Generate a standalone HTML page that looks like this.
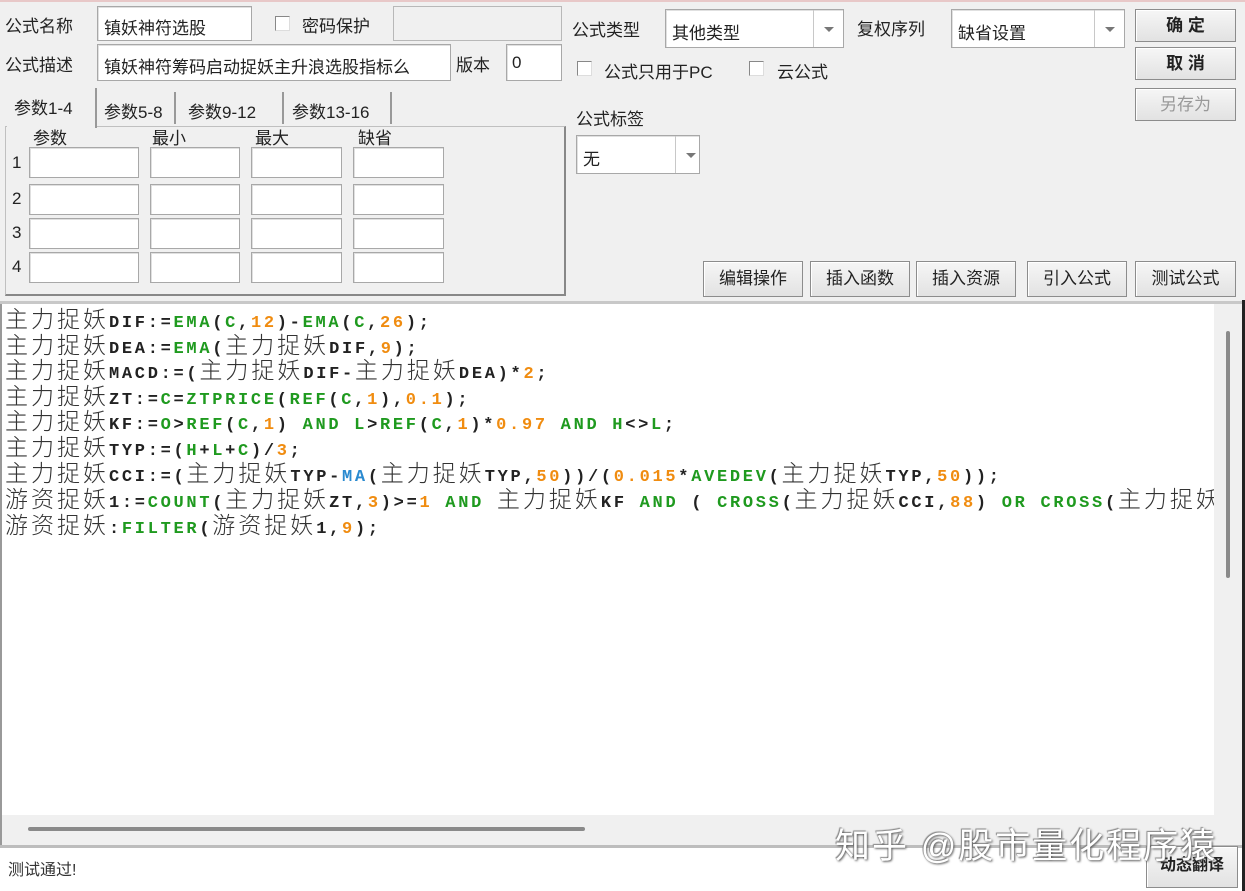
<!DOCTYPE html>
<html><head><meta charset="utf-8"><style>
*{box-sizing:border-box;margin:0;padding:0}
body{width:1245px;height:891px;background:#f0f0f0;position:relative;overflow:hidden;font-family:"Liberation Sans","Noto Sans CJK SC",sans-serif;font-size:17px;color:#222}
.a{position:absolute;white-space:nowrap}
.in{position:absolute;background:#fff;border:1px solid #a8a8a8;box-shadow:inset 1px 1px 0 #e0e0e0}
.dis{position:absolute;background:#f0f0f0;border:1px solid #b8b8b8}
.cb{position:absolute;width:15px;height:15px;background:#fff;border:1px solid #888;border-right-color:#ddd;border-bottom-color:#ddd}
.btn{position:absolute;background:linear-gradient(#f6f6f6,#e2e2e2);border:1px solid #8c8c8c;box-shadow:inset 1px 1px 0 #fff;text-align:center;font-size:17px;color:#222}
.dd{position:absolute;right:0;top:0;bottom:0;width:30px;border-left:1px solid #c8c8c8}
.dd:after{content:"";position:absolute;left:10px;top:50%;margin-top:-2px;border:5px solid transparent;border-top:5px solid #777;border-bottom:0}
.code{position:absolute;left:2px;top:304px;width:1212px;height:511px;background:#fff;overflow:hidden}
.ln{position:absolute;left:3px;height:26px;line-height:26px;white-space:nowrap}
.c{font-family:"Noto Sans CJK SC",sans-serif;font-size:23px;letter-spacing:3px;color:#333;font-weight:300}
.m{font-family:"Liberation Mono",monospace;font-weight:bold;font-size:17px;letter-spacing:2.7px;color:#222}
.g{color:#1f9a1f}.o{color:#f08c10}.b{color:#2a8ad0}
</style></head><body>
<div class="a" style="left:0;top:0;width:1245px;height:2px;background:#e8c8c8"></div>
<div class="a" style="left:5px;top:12px">公式名称</div>
<div class="in" style="left:97px;top:6px;width:155px;height:35px"><span class="a" style="left:6px;top:7px">镇妖神符选股</span></div>
<div class="cb" style="left:275px;top:16px"></div>
<div class="a" style="left:302px;top:12px">密码保护</div>
<div class="dis" style="left:393px;top:6px;width:169px;height:35px"></div>
<div class="a" style="left:5px;top:51px">公式描述</div>
<div class="in" style="left:97px;top:44px;width:354px;height:37px;overflow:hidden"><span class="a" style="left:6px;top:8px">镇妖神符筹码启动捉妖主升浪选股指标么</span></div>
<div class="a" style="left:456px;top:51px">版本</div>
<div class="in" style="left:506px;top:44px;width:56px;height:37px"><span class="a" style="left:5px;top:8px">0</span></div>
<!-- tabs -->
<div class="a" style="left:5px;top:126px;width:561px;height:170px;border:1px solid #c0c0c0;border-right:2px solid #888;border-bottom:2px solid #888;background:#f0f0f0"></div>
<div class="a" style="left:7px;top:88px;width:90px;height:40px;background:#f0f0f0;border-right:2px solid #999"></div>
<div class="a" style="left:14px;top:94px">参数1-4</div>
<div class="a" style="left:98px;top:92px;width:78px;height:32px;border-right:2px solid #999"></div>
<div class="a" style="left:104px;top:98px">参数5-8</div>
<div class="a" style="left:188px;top:98px">参数9-12</div>
<div class="a" style="left:244px;top:92px;width:40px;height:32px;border-right:2px solid #999"></div>
<div class="a" style="left:292px;top:98px">参数13-16</div>
<div class="a" style="left:340px;top:92px;width:52px;height:32px;border-right:2px solid #999"></div>
<div class="a" style="left:33px;top:124px">参数</div>
<div class="a" style="left:152px;top:124px">最小</div>
<div class="a" style="left:255px;top:124px">最大</div>
<div class="a" style="left:358px;top:124px">缺省</div>
<div class="a" style="left:12px;top:153px">1</div><div class="a" style="left:12px;top:189px">2</div><div class="a" style="left:12px;top:223px">3</div><div class="a" style="left:12px;top:257px">4</div>
<div class="in" style="left:29px;top:147px;width:110px;height:31px"></div><div class="in" style="left:150px;top:147px;width:90px;height:31px"></div><div class="in" style="left:251px;top:147px;width:91px;height:31px"></div><div class="in" style="left:353px;top:147px;width:91px;height:31px"></div>
<div class="in" style="left:29px;top:184px;width:110px;height:31px"></div><div class="in" style="left:150px;top:184px;width:90px;height:31px"></div><div class="in" style="left:251px;top:184px;width:91px;height:31px"></div><div class="in" style="left:353px;top:184px;width:91px;height:31px"></div>
<div class="in" style="left:29px;top:218px;width:110px;height:31px"></div><div class="in" style="left:150px;top:218px;width:90px;height:31px"></div><div class="in" style="left:251px;top:218px;width:91px;height:31px"></div><div class="in" style="left:353px;top:218px;width:91px;height:31px"></div>
<div class="in" style="left:29px;top:252px;width:110px;height:31px"></div><div class="in" style="left:150px;top:252px;width:90px;height:31px"></div><div class="in" style="left:251px;top:252px;width:91px;height:31px"></div><div class="in" style="left:353px;top:252px;width:91px;height:31px"></div>
<!-- right top -->
<div class="a" style="left:572px;top:16px">公式类型</div>
<div class="in" style="left:665px;top:9px;width:179px;height:39px"><span class="a" style="left:6px;top:9px">其他类型</span><div class="dd"></div></div>
<div class="a" style="left:857px;top:15px">复权序列</div>
<div class="in" style="left:951px;top:9px;width:174px;height:39px"><span class="a" style="left:6px;top:9px">缺省设置</span><div class="dd"></div></div>
<div class="cb" style="left:577px;top:61px"></div>
<div class="a" style="left:604px;top:58px">公式只用于PC</div>
<div class="cb" style="left:749px;top:61px"></div>
<div class="a" style="left:777px;top:58px">云公式</div>
<div class="a" style="left:576px;top:105px">公式标签</div>
<div class="in" style="left:576px;top:135px;width:124px;height:39px"><span class="a" style="left:6px;top:9px">无</span><div class="dd" style="width:24px"></div></div>
<div class="btn" style="left:1135px;top:9px;width:101px;height:33px;line-height:31px;font-weight:bold">确&nbsp;定</div>
<div class="btn" style="left:1135px;top:47px;width:101px;height:33px;line-height:31px;font-weight:bold">取&nbsp;消</div>
<div class="btn" style="left:1135px;top:88px;width:101px;height:33px;line-height:31px;color:#999">另存为</div>
<div class="btn" style="left:703px;top:261px;width:100px;height:36px;line-height:34px">编辑操作</div>
<div class="btn" style="left:810px;top:261px;width:100px;height:36px;line-height:34px">插入函数</div>
<div class="btn" style="left:916px;top:261px;width:100px;height:36px;line-height:34px">插入资源</div>
<div class="btn" style="left:1027px;top:261px;width:100px;height:36px;line-height:34px">引入公式</div>
<div class="btn" style="left:1135px;top:261px;width:101px;height:36px;line-height:34px">测试公式</div>
<div class="a" style="left:0;top:301px;width:1245px;height:3px;background:#c8c8c8"></div>
<!-- code -->
<div class="code">
<div class="ln" style="top:0"><span class="c">主力捉妖</span><span class="m">DIF:=<span class="g">EMA</span>(<span class="g">C</span>,<span class="o">12</span>)-<span class="g">EMA</span>(<span class="g">C</span>,<span class="o">26</span>);</span></div>
<div class="ln" style="top:26px"><span class="c">主力捉妖</span><span class="m">DEA:=<span class="g">EMA</span>(</span><span class="c">主力捉妖</span><span class="m">DIF,<span class="o">9</span>);</span></div>
<div class="ln" style="top:51px"><span class="c">主力捉妖</span><span class="m">MACD:=(</span><span class="c">主力捉妖</span><span class="m">DIF-</span><span class="c">主力捉妖</span><span class="m">DEA)*<span class="o">2</span>;</span></div>
<div class="ln" style="top:77px"><span class="c">主力捉妖</span><span class="m">ZT:=<span class="g">C</span>=<span class="g">ZTPRICE</span>(<span class="g">REF</span>(<span class="g">C</span>,<span class="o">1</span>),<span class="o">0.1</span>);</span></div>
<div class="ln" style="top:102px"><span class="c">主力捉妖</span><span class="m">KF:=<span class="g">O</span>&gt;<span class="g">REF</span>(<span class="g">C</span>,<span class="o">1</span>) <span class="g">AND L</span>&gt;<span class="g">REF</span>(<span class="g">C</span>,<span class="o">1</span>)*<span class="o">0.97</span> <span class="g">AND H</span>&lt;&gt;<span class="g">L</span>;</span></div>
<div class="ln" style="top:128px"><span class="c">主力捉妖</span><span class="m">TYP:=(<span class="g">H</span>+<span class="g">L</span>+<span class="g">C</span>)/<span class="o">3</span>;</span></div>
<div class="ln" style="top:154px"><span class="c">主力捉妖</span><span class="m">CCI:=(</span><span class="c">主力捉妖</span><span class="m">TYP-<span class="b">MA</span>(</span><span class="c">主力捉妖</span><span class="m">TYP,<span class="o">50</span>))/(<span class="o">0.015</span>*<span class="g">AVEDEV</span>(</span><span class="c">主力捉妖</span><span class="m">TYP,<span class="o">50</span>));</span></div>
<div class="ln" style="top:180px"><span class="c">游资捉妖</span><span class="m">1:=<span class="g">COUNT</span>(</span><span class="c">主力捉妖</span><span class="m">ZT,<span class="o">3</span>)&gt;=<span class="o">1</span> <span class="g">AND</span> </span><span class="c">主力捉妖</span><span class="m">KF <span class="g">AND</span> ( <span class="g">CROSS</span>(</span><span class="c">主力捉妖</span><span class="m">CCI,<span class="o">88</span>) <span class="g">OR CROSS</span>(</span><span class="c">主力捉妖</span></div>
<div class="ln" style="top:206px"><span class="c">游资捉妖</span><span class="m">:<span class="g">FILTER</span>(</span><span class="c">游资捉妖</span><span class="m">1,<span class="o">9</span>);</span></div>
</div>
<div class="a" style="left:1214px;top:304px;width:28px;height:541px;background:#f0f0f0"></div>
<div class="a" style="left:1226px;top:331px;width:4px;height:247px;background:#8a8a8a;border-radius:2px"></div>
<div class="a" style="left:1242px;top:300px;width:3px;height:591px;background:#222"></div>
<div class="a" style="left:0;top:304px;width:2px;height:545px;background:#999"></div>
<div class="a" style="left:2px;top:815px;width:1212px;height:30px;background:#f0f0f0"></div>
<div class="a" style="left:28px;top:827px;width:557px;height:4px;background:#8a8a8a;border-radius:2px"></div>
<div class="a" style="left:0;top:845px;width:1242px;height:3px;background:#bdbdbd"></div>
<div class="a" style="left:0;top:848px;width:1242px;height:43px;background:#fff"></div>
<div class="a" style="left:8px;top:856px;font-size:16px;color:#333">测试通过!</div>
<div class="btn" style="left:1146px;top:846px;width:92px;height:42px;line-height:38px;font-weight:bold;font-size:16px">动态翻译</div>
<div class="a" style="left:835px;top:818px;font-size:35px;color:#fff;text-shadow:1px 1px 2px #555,-1px -1px 1px #888;letter-spacing:2px">知乎 @股市量化程序猿</div>
</body></html>
